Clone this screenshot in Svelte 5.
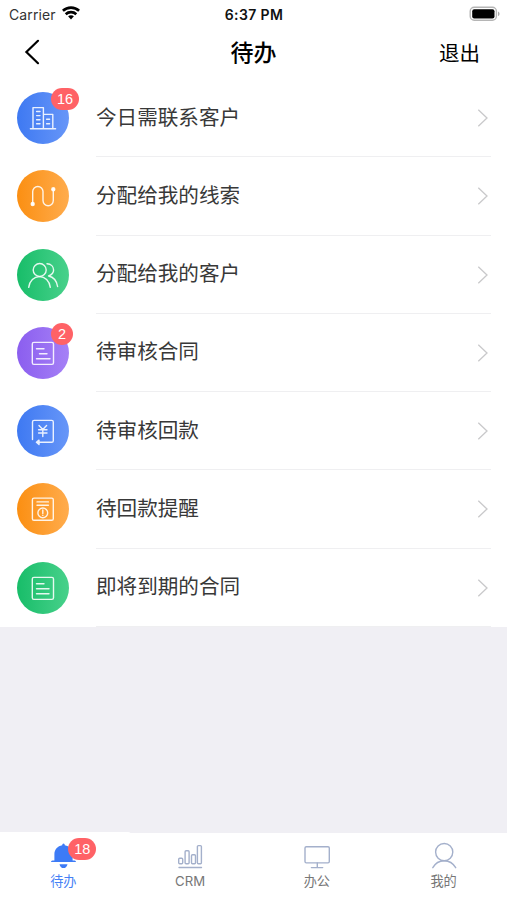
<script>
  const rows = [
    { label: '今日需联系客户', color: 'blue', icon: 'building', badge: 16 },
    { label: '分配给我的线索', color: 'orange', icon: 'route' },
    { label: '分配给我的客户', color: 'green', icon: 'people' },
    { label: '待审核合同', color: 'purple', icon: 'contract', badge: 2 },
    { label: '待审核回款', color: 'blue', icon: 'payment' },
    { label: '待回款提醒', color: 'orange', icon: 'reminder' },
    { label: '即将到期的合同', color: 'green', icon: 'expiring' }
  ];
  const tabs = [
    { label: '待办', icon: 'bell', badge: 18, active: true },
    { label: 'CRM', icon: 'chart' },
    { label: '办公', icon: 'monitor' },
    { label: '我的', icon: 'user' }
  ];
</script>

<div class="screen">
  <div class="status">
    <div class="carrier">
      <span>Carrier</span>
      <svg width="18" height="14" viewBox="0 0 18 14" fill="none" stroke="#000" stroke-width="2.6">
        <path d="M.9 4.8C5.4.6 12.6.6 17.1 4.8" />
        <path d="M3.7 8.2c2.9-2.8 7.7-2.8 10.6 0" />
        <path d="M6.1 10.3c1.6-1.4 4.2-1.4 5.8 0L9 13.4z" fill="#000" stroke="none" />
      </svg>
    </div>
    <span class="time">6:37 PM</span>
    <svg class="battery" width="32" height="16" viewBox="0 0 32 16">
      <rect x="1.2" y="1.2" width="26.2" height="13" rx="4" fill="#fff" stroke="#b5b5b5" stroke-width="1.4" />
      <rect x="3.2" y="3.2" width="22.3" height="9.2" rx="2" fill="#000" />
      <path d="M29 5.4c2 .8 2 3.8 0 4.6z" fill="#aaa" />
    </svg>
  </div>

  <header>
    <svg class="back" width="16" height="26" viewBox="0 0 16 26" fill="none" stroke="#000" stroke-width="2.2" stroke-linecap="round">
      <path d="M14 1.8 2.4 13 14 24.2" />
    </svg>
    <h1>待办</h1>
    <span class="exit">退出</span>
  </header>

  <main>
    {#each rows as row}
      <div class="row">
        <div class="disc {row.color}">
          <svg width="52" height="52" viewBox="0 0 52 52" fill="none" stroke="#fff" stroke-opacity=".88" stroke-width="1.4" stroke-linecap="round" stroke-linejoin="round">
            {#if row.icon === 'building'}
              <path d="M13.4 36.7H38.6M16 36.5V15.6H26.4V36.5M26.4 22.4H35.8V36.5M19.6 19.5h3.4M19.6 23.6h3.4M19.6 27.7h3.4M19.6 31.8h3.4M29.6 27.2h3M29.6 31.8h3" />
            {:else if row.icon === 'route'}
              <path d="M15.7 33.8V21.6a5.15 5.15 0 0 1 10.3 0V30.6a5.15 5.15 0 0 0 10.3 0V19.5" />
              <circle cx="15.7" cy="34" r="1.5" fill="#fff" />
              <circle cx="36.3" cy="19.3" r="1.5" fill="#fff" />
            {:else if row.icon === 'people'}
              <circle cx="22.7" cy="21" r="6.5" />
              <path d="M11.7 38.3C12.6 31.5 17 27.6 22.5 27.6s9.9 3.9 10.8 10.7M30 14.8c4 .1 6.6 2.8 6.6 6.2 0 2.9-2 4.8-5 6 5.1 1.1 8.1 5 9 10.5" />
            {:else if row.icon === 'contract'}
              <rect x="15.3" y="15.4" width="21.2" height="22" rx="1.6" />
              <path d="M19.5 21.7h7.5M22.5 26.7h7.5M19.5 31.8h13.5" />
            {:else if row.icon === 'expiring'}
              <rect x="15.3" y="15.4" width="21.2" height="22" rx="1.6" />
              <path d="M19.5 21.7h7.5M19.5 26.7h12.5M19.5 31.8h12.5" />
            {:else if row.icon === 'payment'}
              <path d="M15.5 34.5V17q0-1.6 1.6-1.6H34.7q1.6 0 1.6 1.6V35.7q0 1.6-1.6 1.6H21M22 35.1l-2.6 2.2 2.6 2.2z" />
              <path d="m22 20.4 3.8 4.1 3.8-4.1M21.6 24.8h8.4M21.6 28h8.4M25.8 24.8v6.8" />
            {:else}
              <rect x="15.4" y="15.1" width="20.9" height="22.2" rx="1.6" />
              <path d="M20 18.9h11.4M20 22.2h11.4M25.8 27v3.4M25.8 32.2v.2" />
              <circle cx="25.8" cy="29.9" r="4.9" />
            {/if}
          </svg>
          {#if row.badge}<span class="badge" class:round={row.badge < 10}>{row.badge}</span>{/if}
        </div>
        <div class="body">
          <span class="label">{row.label}</span>
          <svg width="12" height="20" viewBox="0 0 12 20" fill="none" stroke="#c9c9cb" stroke-width="1.3">
            <path d="M1.3 1.8 10 10 1.3 18.2" />
          </svg>
        </div>
      </div>
    {/each}
  </main>

  <nav>
    {#each tabs as tab}
      <div class="tab" class:active={tab.active}>
        <div class="tabicon">
          <svg width="30" height="28" viewBox="0 0 30 28" fill="none" stroke="#a4b0cb" stroke-width="1.4" stroke-linecap="round">
            {#if tab.icon === 'bell'}
              <path d="M14.2 3.2q0-1.7 1.3-1.7t1.3 1.7c4.6.9 7.8 4.3 7.8 9v6.2h2q1.4 0 1.4 1.5H3q0-1.5 1.4-1.5h2v-6.2c0-4.7 3.2-8.1 7.8-9zM11.5 22.2h8c-.4 2.4-2 3.9-4 3.9s-3.6-1.5-4-3.9z" fill="#3d7bf6" stroke="none" />
            {:else if tab.icon === 'chart'}
              <path d="M4 25.5h22.5" />
              <rect x="3.7" y="16.2" width="4" height="5.6" rx="1" />
              <rect x="10.1" y="8.8" width="4" height="13" rx="1" />
              <rect x="16.5" y="12.8" width="4" height="9" rx="1" />
              <rect x="22.4" y="3.6" width="4" height="18.2" rx="1" />
            {:else if tab.icon === 'monitor'}
              <rect x="3" y="4.7" width="24.3" height="16.2" rx="1.3" />
              <path d="M15.3 21v4.6M9.4 25.6h11.3" />
            {:else}
              <circle cx="15.2" cy="10.1" r="8.6" />
              <path d="M3.8 25.7C6.4 21 10.4 18.7 15.2 18.7S24 21 26.7 25.7" />
            {/if}
          </svg>
          {#if tab.badge}<span class="badge">{tab.badge}</span>{/if}
        </div>
        <span class="tablabel">{tab.label}</span>
      </div>
    {/each}
  </nav>
</div>

<style>
  .screen {
    width: 507px;
    height: 900px;
    display: flex;
    flex-direction: column;
    overflow: hidden;
    background: #f0eff4;
    color: #333;
    font-family: Inter, 'Noto Sans CJK SC', sans-serif;
  }
  .status {
    height: 27px;
    flex: none;
    box-sizing: border-box;
    display: grid;
    grid-template-columns: 1fr auto 1fr;
    align-items: center;
    padding: 0 6px 0 9px;
    background: #fff;
    font-size: 14px;
    line-height: 27px;
  }
  .carrier { display: flex; align-items: center; gap: 6px; letter-spacing: .1px; }
  .carrier svg { margin-top: -2px; }
  .time { color: #111; font-size: 14px; font-weight: 600; letter-spacing: .4px; margin: 1px 2px 0 0; }
  .battery { justify-self: end; }
  header {
    height: 52px;
    flex: none;
    box-sizing: border-box;
    display: grid;
    grid-template-columns: 1fr auto 1fr;
    align-items: center;
    padding: 0 27px 2px 24px;
    background: #fff;
    color: #000;
  }
  h1 { margin: 0 0 0 3px; padding-top: 1px; font-size: 23px; line-height: 30px; font-weight: 500; }
  .exit { justify-self: end; font-size: 20.5px; line-height: 30px; padding-top: 4px; }
  main { flex: none; background: #fff; }
  .row {
    height: 78.25px;
    box-sizing: border-box;
    display: flex;
    align-items: center;
    padding: 0 16px 0 17px;
  }
  .disc { position: relative; width: 52px; height: 52px; flex: none; border-radius: 50%; }
  .disc svg { display: block; }
  .blue { background: linear-gradient(90deg, #3e79f2, #6796f8); }
  .orange { background: linear-gradient(90deg, #fb8f12, #ffac4d); }
  .green { background: linear-gradient(90deg, #18bd69, #48d18b); }
  .purple { background: linear-gradient(90deg, #8b5eef, #a580f6); }
  .badge {
    position: absolute;
    left: 34px;
    top: -4px;
    width: 28px;
    height: 22px;
    border-radius: 11px;
    background: #ff6266;
    color: #fff;
    font: 14.5px/22px 'Liberation Sans', sans-serif;
    text-align: center;
  }
  .badge.round { width: 22px; }
  .body {
    flex: 1;
    height: 100%;
    box-sizing: border-box;
    display: flex;
    align-items: center;
    justify-content: space-between;
    margin-left: 27px;
    padding-right: 2px;
    border-bottom: 1px solid #efeff1;
  }
  .body svg { margin-top: 1px; }
  .label { font-size: 20.6px; line-height: 30px; color: #383838; }
  nav {
    flex: none;
    height: 67px;
    margin-top: auto;
    display: grid;
    grid-template-columns: repeat(4, 1fr);
    background: #fff;
  }
  .tab { display: flex; flex-direction: column; align-items: center; padding-top: 9px; color: #777; }
  .tab.active { margin-top: -1px; padding-top: 10px; margin-right: -4px; padding-right: 4px; background: #fff; border-top-right-radius: 3px; }
  .tabicon { position: relative; height: 28px; }
  .tabicon .badge { left: 20px; top: -4px; }
  .tablabel { font-size: 13.2px; line-height: 20px; margin-top: 1px; }
  .active { color: #4580f5; }
</style>
